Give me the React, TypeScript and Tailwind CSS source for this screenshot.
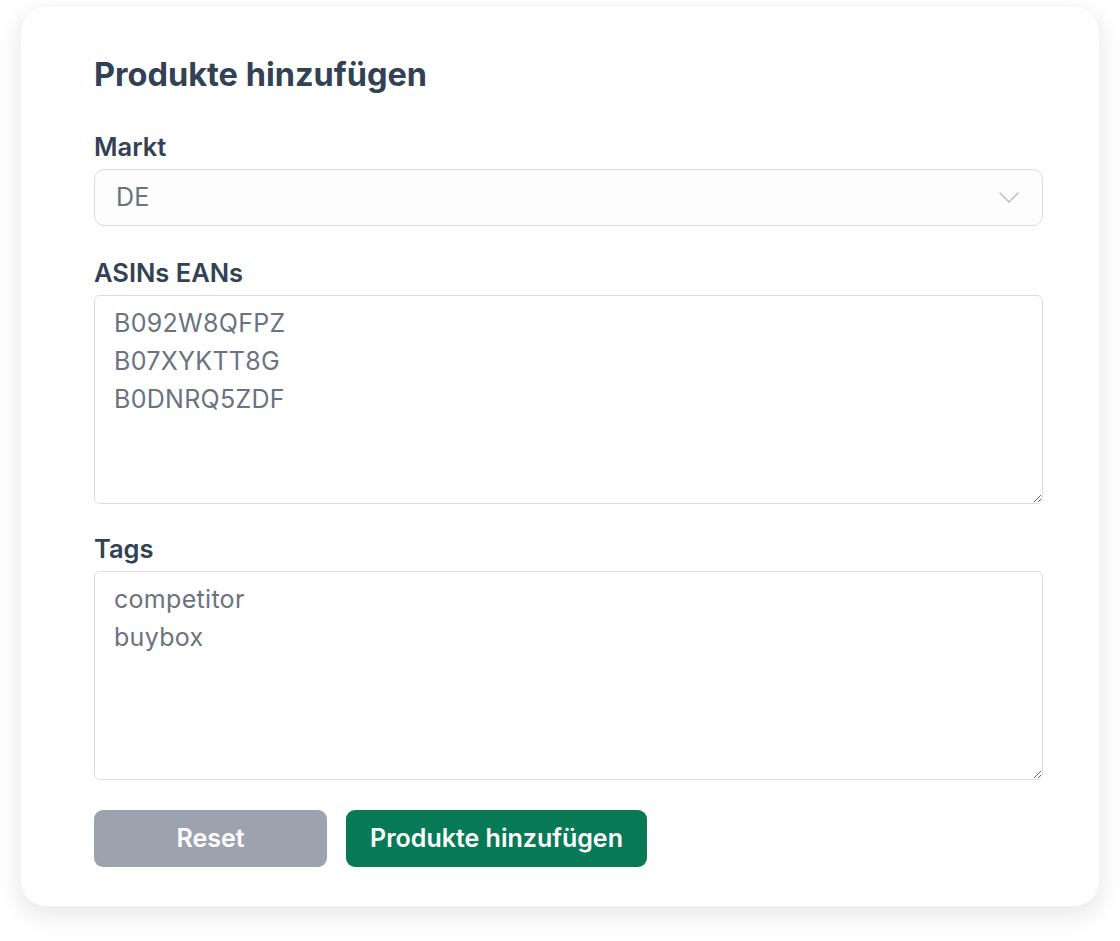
import { useState } from "react";

function Chevron() {
  return (
    <svg width="20" height="11" viewBox="0 0 20 11" fill="none" className="text-[#b4b9c1]">
      <path d="M1 1l9 9 9-9" stroke="currentColor" strokeWidth="1.4" strokeLinecap="round" strokeLinejoin="round" />
    </svg>
  );
}

function Label({ children }: { children: string }) {
  return <label className="block h-[31px] pt-[2px] text-[25.5px] leading-[31px] font-semibold text-[#334155] mb-[9px]">{children}</label>;
}

export default function App() {
  const [asins, setAsins] = useState("B092W8QFPZ\nB07XYKTT8G\nB0DNRQ5ZDF");
  const [tags, setTags] = useState("competitor\nbuybox");

  return (
    <div className="min-h-screen bg-white pt-[5px] px-[20px]" style={{ fontFamily: "Inter, 'Noto Sans', sans-serif" }}>
      <div className="rounded-[26px] bg-white shadow-[0_8px_24px_rgba(0,0,0,0.10)] border border-[#f1f2f4] pl-[73px] pr-[56px] pt-[49px] pb-[39px]">
        <h1 className="text-[32.5px] leading-[40px] font-bold text-[#334155] mb-[34px]">Produkte hinzufügen</h1>

        <Label>Markt</Label>
        <div className="flex items-center justify-between h-[57px] rounded-[10px] border border-[#d9dde3] bg-[#fdfdfd] pl-[21px] pr-[23px] mb-[29px]">
          <span className="text-[25px] tracking-[0.2px] text-[#6b7280]">DE</span>
          <Chevron />
        </div>

        <Label>ASINs EANs</Label>
        <textarea
          value={asins}
          onChange={(e) => setAsins(e.target.value)}
          className="block w-full h-[209px] rounded-[6px] border border-[#d9dde3] bg-white px-[19px] py-[8px] text-[25px] tracking-[0.3px] leading-[38px] text-[#6b7280] outline-none mb-[27px]"
        />

        <Label>Tags</Label>
        <textarea
          value={tags}
          onChange={(e) => setTags(e.target.value)}
          className="block w-full h-[209px] rounded-[6px] border border-[#d9dde3] bg-white px-[19px] py-[8px] text-[25px] tracking-[0.3px] leading-[38px] text-[#6b7280] outline-none mb-[30px]"
        />

        <div className="flex gap-[19px]">
          <button className="w-[233px] h-[57px] rounded-[9px] bg-[#9ca3af] text-white text-[25px] font-semibold">Reset</button>
          <button className="w-[301px] h-[57px] rounded-[9px] bg-[#077a55] text-white text-[25px] font-semibold">Produkte hinzufügen</button>
        </div>
      </div>
    </div>
  );
}
